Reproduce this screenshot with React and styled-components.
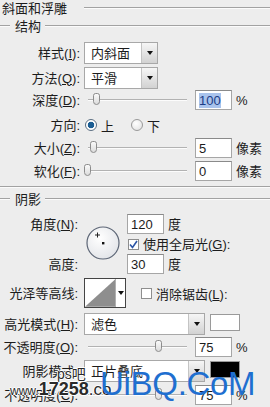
import styled, { createGlobalStyle } from "styled-components";

const GlobalStyle = createGlobalStyle`
  html, body {
    margin: 0;
    padding: 0;
    background: #ededed;
  }
`;

const FONT = `"Liberation Sans", "Noto Sans CJK SC", sans-serif`;

const Panel = styled.div`
  position: relative;
  width: 270px;
  height: 407px;
  overflow: hidden;
  background: #ededed;
  color: #1c1c1c;
  font-family: ${FONT};
  font-size: 13px;
`;

const GroupHead = styled.div`
  display: flex;
  align-items: center;
  height: ${(p) => p.$h}px;
  margin-top: ${(p) => p.$mt || 0}px;
`;

const HeadText = styled.span`
  padding-left: ${(p) => p.$pl || 0}px;
  margin-right: ${(p) => p.$mr || 0}px;
  white-space: nowrap;
  line-height: 1;
`;

const Rule = styled.div`
  flex: ${(p) => (p.$w ? "none" : 1)};
  width: ${(p) => (p.$w ? p.$w + "px" : "auto")};
  height: 0;
  border-top: 1px solid #a2a2a2;
  border-bottom: 1px solid #fbfbfb;
`;

const Separator = styled.div`
  margin-top: ${(p) => p.$mt}px;
  border-top: 1px solid #a2a2a2;
  border-bottom: 1px solid #fbfbfb;
`;

const Row = styled.div`
  display: flex;
  align-items: center;
  height: ${(p) => p.$h}px;
  margin-top: ${(p) => p.$mt || 0}px;
`;

const Label = styled.div`
  width: 84px;
  box-sizing: border-box;
  padding-right: ${(p) => p.$pr ?? 4}px;
  text-align: right;
  white-space: nowrap;
  flex-shrink: 0;
  line-height: 1;
`;

const Select = styled.div`
  display: flex;
  width: ${(p) => p.$w}px;
  height: 22px;
  box-sizing: border-box;
  border: 1px solid #a8a8a8;
  background: #fff;
`;

const SelectText = styled.div`
  flex: 1;
  display: flex;
  align-items: center;
  padding-left: 6px;
  line-height: 1;
`;

const SelectButton = styled.div`
  width: 15px;
  display: flex;
  align-items: center;
  justify-content: center;
  border-left: 1px solid #c4c4c4;
  background: linear-gradient(#f6f6f6, #d2d2d2);
  &::after {
    content: "";
    border-left: 3.5px solid transparent;
    border-right: 3.5px solid transparent;
    border-top: 4px solid #111;
  }
`;

const Swatch = styled.div`
  width: 30px;
  height: 17px;
  margin-left: 5px;
  box-sizing: border-box;
  border: 1px solid #9a9a9a;
  background: ${(p) => p.$color};
  align-self: flex-start;
  margin-top: 1px;
`;

const Track = styled.div`
  position: relative;
  width: 99px;
  height: 2px;
  margin-left: 4px;
  border-top: 1px solid #b2b2b2;
  border-bottom: 1px solid #fcfcfc;
  box-sizing: border-box;
`;

const Thumb = styled.div`
  position: absolute;
  top: -7px;
  width: 7px;
  height: 12px;
  box-sizing: border-box;
  border: 1px solid #8c8c8c;
  border-radius: 3px 3px 4px 4px;
  background: linear-gradient(#fafafa, #dcdcdc);
`;

const Field = styled.div`
  width: 37px;
  height: 20px;
  margin-left: ${(p) => p.$ml ?? 8}px;
  box-sizing: border-box;
  border: 1px solid #a6a6a6;
  border-top-color: #8a8a8a;
  background: #fff;
  display: flex;
  align-items: center;
  padding-left: 3px;
  line-height: 1;
`;

const Selected = styled.span`
  background: #a9c3ec;
  color: #1b3c86;
  padding: 1px 0;
`;

const Unit = styled.span`
  margin-left: 4px;
  line-height: 1;
  white-space: nowrap;
`;

const Radio = styled.span`
  width: 12px;
  height: 12px;
  box-sizing: border-box;
  border-radius: 50%;
  border: 1px solid ${(p) => (p.$on ? "#5c6f82" : "#9a9a9a")};
  background: ${(p) =>
    p.$on
      ? "radial-gradient(circle, #1b5d93 0 3px, #fff 3.6px)"
      : "radial-gradient(circle at 40% 35%, #fff, #dedede)"};
  margin-left: ${(p) => p.$ml || 0}px;
  margin-right: 4px;
  flex-shrink: 0;
`;

const Check = styled.span`
  width: 11px;
  height: 11px;
  box-sizing: border-box;
  border: 1px solid #8e8e8e;
  background: #fff;
  display: flex;
  align-items: center;
  justify-content: center;
  margin-left: ${(p) => p.$ml || 0}px;
  margin-right: 4px;
  flex-shrink: 0;
`;

const AngleBlock = styled.div`
  display: grid;
  grid-template-columns: 84px 43px auto;
  margin-top: 6px;
`;

const AngleLabels = styled.div`
  display: flex;
  flex-direction: column;
  justify-content: space-between;
  height: 60px;
`;

const LabelCell = styled(Label)`
  height: 20px;
  display: flex;
  align-items: center;
  justify-content: flex-end;
`;

const Dial = styled.div`
  padding-top: 12px;
  padding-left: 2px;
`;

const AngleFields = styled.div`
  display: flex;
  flex-direction: column;
  gap: 3px;
`;

const Inline = styled.div`
  display: flex;
  align-items: center;
  height: ${(p) => p.$h || 20}px;
  white-space: nowrap;
  line-height: 1;
`;

const Contour = styled.div`
  display: flex;
  width: 42px;
  height: 30px;
  box-sizing: border-box;
  border: 1px solid #444;
  background: #fff;
`;

const ContourArrow = styled.div`
  width: 9px;
  display: flex;
  align-items: center;
  justify-content: center;
  border-left: 1px solid #b0b0b0;
  &::after {
    content: "";
    border-left: 3px solid transparent;
    border-right: 3px solid transparent;
    border-top: 4px solid #111;
  }
`;

const Mark = styled.div`
  position: absolute;
  left: ${(p) => p.$x}px;
  top: ${(p) => p.$y}px;
  white-space: nowrap;
  pointer-events: none;
  line-height: 1;
`;

const BlueMark = styled(Mark)`
  font-family: "Liberation Sans", Arial, sans-serif;
  font-size: 33px;
  color: #1f6fd0;
  letter-spacing: -0.3px;
`;

const DarkMark = styled(Mark)`
  display: flex;
  align-items: baseline;
  font-family: ${FONT};
  font-size: ${(p) => p.$size}px;
  color: #2a2a2a;
  text-shadow: 1px 0 #fff, -1px 0 #fff, 0 1px #fff, 0 -1px #fff;
`;

const MarkPart = styled.span`
  font-size: ${(p) => p.$size}px;
  font-weight: ${(p) => p.$weight || 400};
  color: #2a2a2a;
`;

const U = styled.span`
  text-decoration: underline;
  text-underline-offset: 1px;
`;

const Key = ({ k }) => (
  <>
    (<U>{k}</U>):
  </>
);

const Slider = ({ at }) => (
  <Track>
    <Thumb style={{ left: at - 92 }} />
  </Track>
);

const Tick = () => (
  <svg width="9" height="9" viewBox="0 0 9 9">
    <path d="M1 4.5 L3.5 7.5 L8 1" fill="none" stroke="#2c55a6" strokeWidth="1.6" />
  </svg>
);

export default function App() {
  return (
    <>
      <GlobalStyle />
      <Panel>
        <GroupHead $h={16}>
          <HeadText $pl={2} $mr={17}>斜面和浮雕</HeadText>
          <Rule />
        </GroupHead>
        <GroupHead $h={18} $mt={1}>
          <Rule $w={10} />
          <HeadText $pl={5} $mr={4}>结构</HeadText>
          <Rule />
        </GroupHead>

        <Row $h={22} $mt={7}>
          <Label>样式<Key k="I" /></Label>
          <Select $w={74}>
            <SelectText>内斜面</SelectText>
            <SelectButton />
          </Select>
        </Row>
        <Row $h={22} $mt={3}>
          <Label>方法<Key k="Q" /></Label>
          <Select $w={74}>
            <SelectText>平滑</SelectText>
            <SelectButton />
          </Select>
        </Row>
        <Row $h={20} $mt={1}>
          <Label>深度<Key k="D" /></Label>
          <Slider at={97} />
          <Field><Selected>100</Selected></Field>
          <Unit>%</Unit>
        </Row>
        <Row $h={20} $mt={5}>
          <Label>方向:</Label>
          <Radio $on $ml={1} />
          <span>上</span>
          <Radio $ml={17} />
          <span>下</span>
        </Row>
        <Row $h={20} $mt={3}>
          <Label>大小<Key k="Z" /></Label>
          <Slider at={94} />
          <Field>5</Field>
          <Unit>像素</Unit>
        </Row>
        <Row $h={20} $mt={3}>
          <Label>软化<Key k="F" /></Label>
          <Slider at={88} />
          <Field>0</Field>
          <Unit>像素</Unit>
        </Row>

        <Separator $mt={5} />
        <GroupHead $h={18} $mt={2}>
          <Rule $w={10} />
          <HeadText $pl={5} $mr={4}>阴影</HeadText>
          <Rule />
        </GroupHead>

        <AngleBlock>
          <AngleLabels>
            <LabelCell $pr={6}>角度<Key k="N" /></LabelCell>
            <LabelCell $pr={6}>高度:</LabelCell>
          </AngleLabels>
          <Dial>
            <svg width="34" height="34" viewBox="0 0 34 34">
              <defs>
                <radialGradient id="dialFill" cx="40%" cy="35%" r="70%">
                  <stop offset="0" stopColor="#ffffff" />
                  <stop offset="1" stopColor="#e2e4e8" />
                </radialGradient>
              </defs>
              <circle cx="17" cy="17" r="16" fill="url(#dialFill)" stroke="#5d6676" strokeWidth="1.2" />
              <rect x="16" y="16" width="2.4" height="2.4" fill="#111" />
              <path d="M11.5 6.5 V11.5 M9 9 H14" stroke="#222" strokeWidth="1" />
            </svg>
          </Dial>
          <AngleFields>
            <Inline>
              <Field $ml={0}>120</Field>
              <Unit>度</Unit>
            </Inline>
            <Inline $h={14}>
              <Check $ml={1}><Tick /></Check>
              使用全局光<Key k="G" />
            </Inline>
            <Inline>
              <Field $ml={0}>30</Field>
              <Unit>度</Unit>
            </Inline>
          </AngleFields>
        </AngleBlock>

        <Row $h={30} $mt={4}>
          <Label $pr={6}>光泽等高线:</Label>
          <Contour>
            <svg width="31" height="28" viewBox="0 0 31 28">
              <polygon points="0,28 31,0 31,28" fill="#8e8e8e" />
            </svg>
            <ContourArrow />
          </Contour>
          <Check $ml={15}></Check>
          <span>消除锯齿<Key k="L" /></span>
        </Row>

        <Row $h={22} $mt={5}>
          <Label $pr={6}>高光模式<Key k="H" /></Label>
          <Select $w={121}>
            <SelectText>滤色</SelectText>
            <SelectButton />
          </Select>
          <Swatch $color="#ffffff" />
        </Row>
        <Row $h={20} $mt={2}>
          <Label $pr={6}>不透明度<Key k="O" /></Label>
          <Slider at={159} />
          <Field>75</Field>
          <Unit>%</Unit>
        </Row>
        <Row $h={22} $mt={3}>
          <Label $pr={6}>阴影模式:</Label>
          <Select $w={121}>
            <SelectText>正片叠底</SelectText>
            <SelectButton />
          </Select>
          <Swatch $color="#000000" />
        </Row>
        <Row $h={20} $mt={3}>
          <Label $pr={6}>不透明度<Key k="C" /></Label>
          <Slider at={159} />
          <Field>75</Field>
          <Unit>%</Unit>
        </Row>

        <DarkMark $x={57} $y={367} $size={14}>ps吧</DarkMark>
        <DarkMark $x={10} $y={380} $size={13}>
          <MarkPart $size={12}>www.</MarkPart>
          <MarkPart $size={18} $weight={700}>17258</MarkPart>
          <MarkPart $size={17}>.co</MarkPart>
        </DarkMark>
        <BlueMark $x={100} $y={367}>UiBQ.CoM</BlueMark>
      </Panel>
    </>
  );
}
